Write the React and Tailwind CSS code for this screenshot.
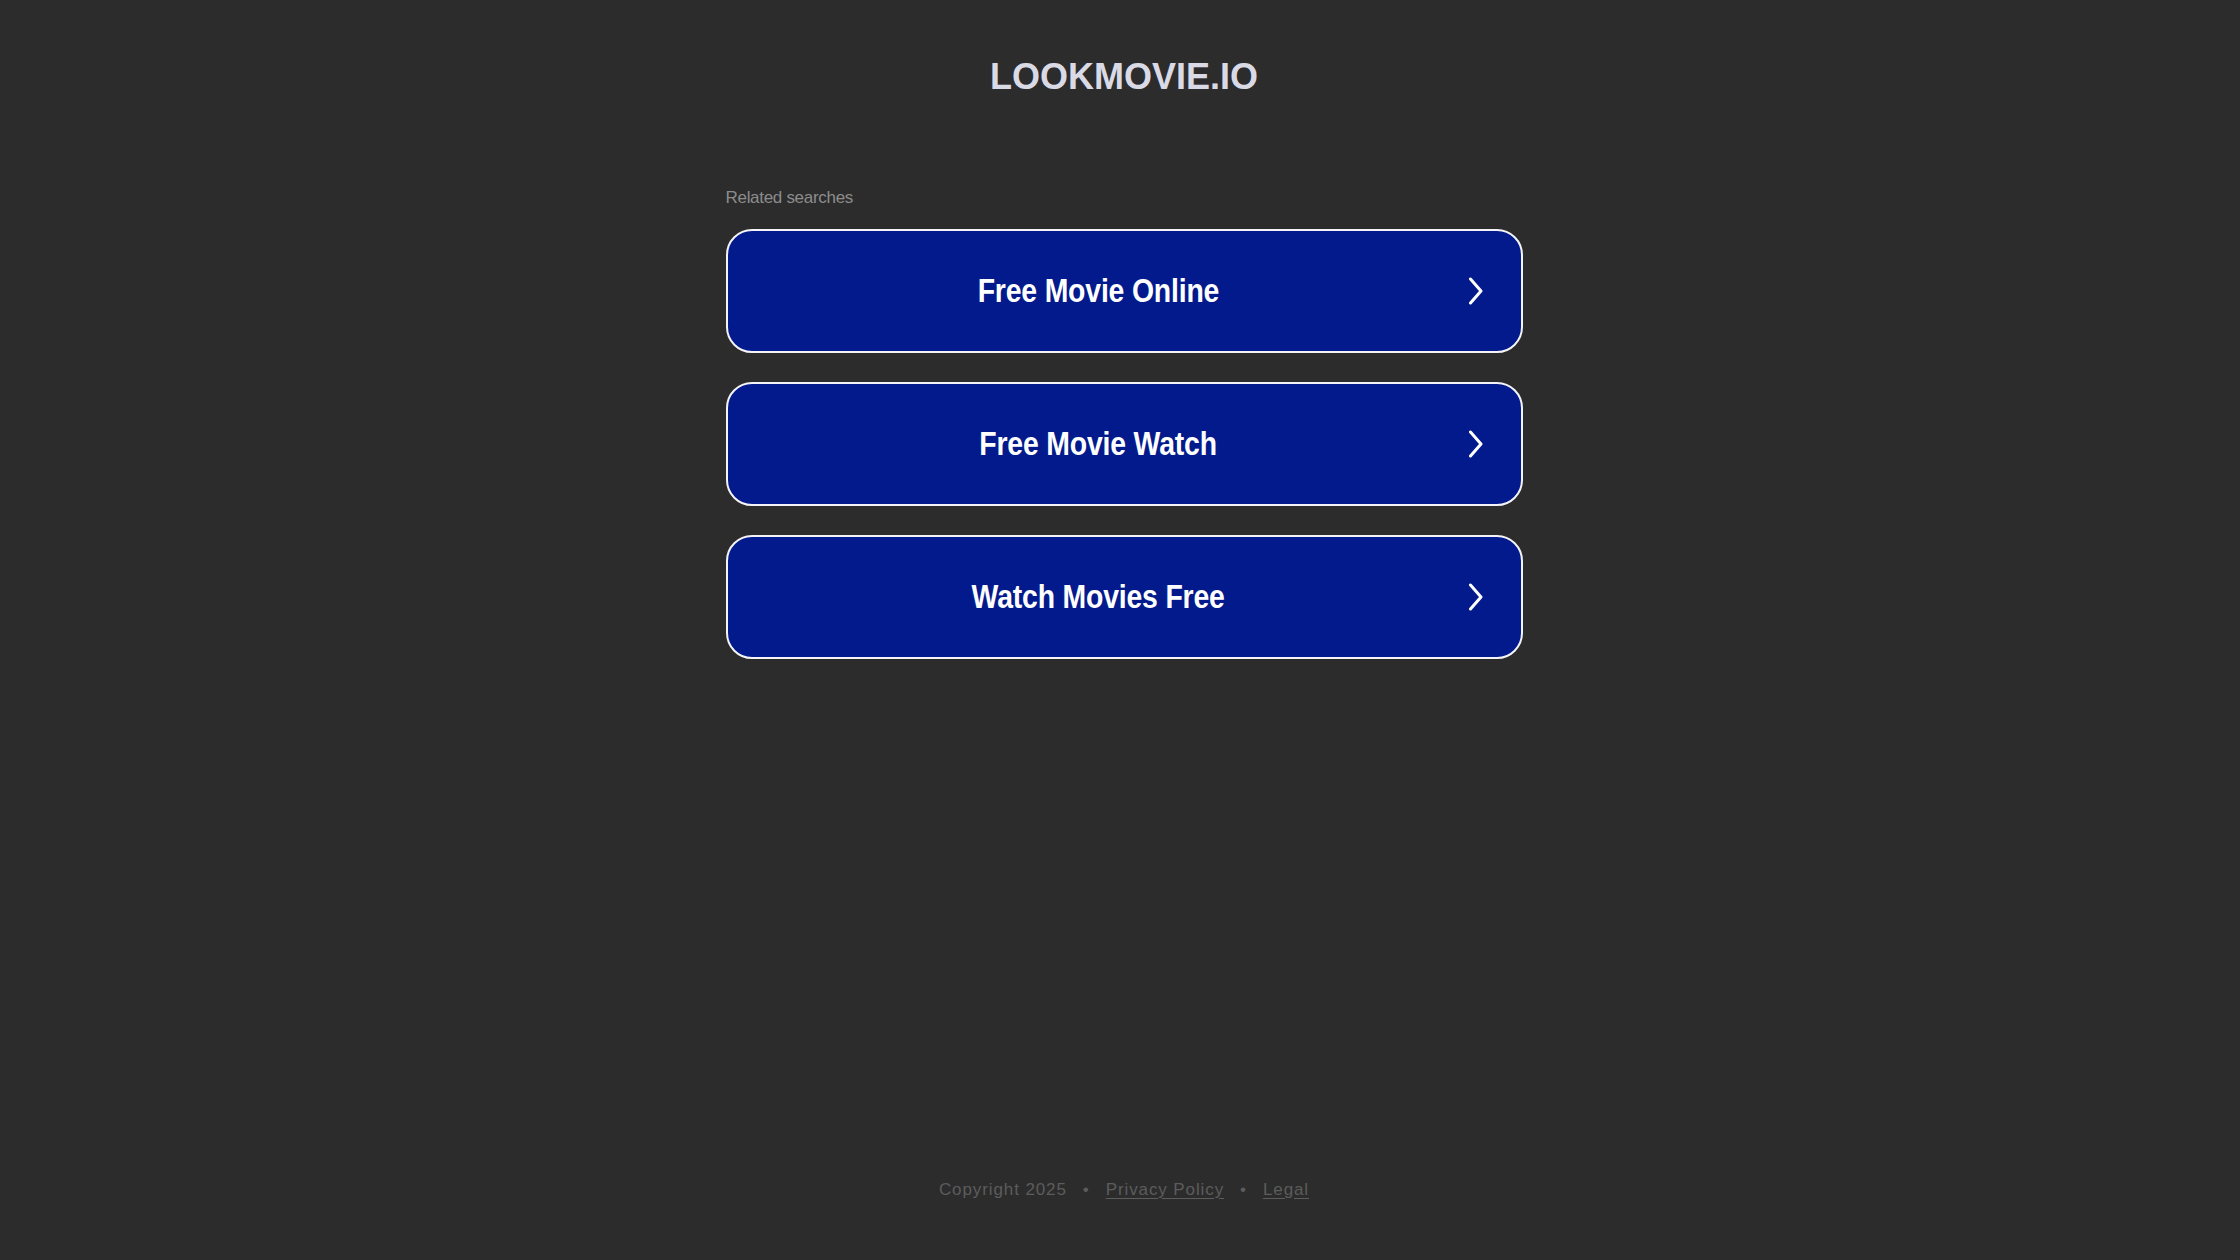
// Parked domain landing page
const searches = ['Free Movie Online', 'Free Movie Watch', 'Watch Movies Free'];

function Chevron() {
  return (
    <svg width="16" height="28" viewBox="0 0 16 28" fill="none" className="shrink-0">
      <path d="M2.5 2 L13 14 L2.5 26" stroke="#ffffff" strokeWidth="3" strokeLinecap="round" strokeLinejoin="round" />
    </svg>
  );
}

export default function App() {
  return (
    <div
      className="min-h-[1260px] bg-[#2c2c2c] flex flex-col pl-2"
      style={{ fontFamily: '"Liberation Sans", Arial, sans-serif' }}
    >
      <h1 className="text-center text-[36px] leading-[44px] font-bold text-[#d9dae6] pt-[55px]">LOOKMOVIE.IO</h1>

      <div className="w-[797px] mx-auto mt-[89px]">
        <div className="text-[17px] leading-[20px] text-[#8c8c8c] tracking-[-0.3px]">Related searches</div>
        <div className="flex flex-col gap-[29px] mt-[21px]">
          {searches.map((s) => (
            <a
              key={s}
              href="#"
              className="h-[124px] flex items-center bg-[#021a8c] border-[2.5px] border-[#f4f4f8] rounded-[26px]"
            >
              <span className="flex-1 text-center pl-[6px]">
                <span className="inline-block scale-x-[0.86] text-white font-bold text-[33px] tracking-[-0.2px]">
                  {s}
                </span>
              </span>
              <span className="w-[57px] flex justify-start pl-[4px]">
                <Chevron />
              </span>
            </a>
          ))}
        </div>
      </div>

      <div className="mt-auto pb-[58px] text-center text-[17px] leading-[24px] tracking-[0.9px] text-[#5c5c5c]">
        <span>Copyright 2025</span>
        <span className="mx-[16px]">•</span>
        <a href="#" className="underline underline-offset-[3px]">Privacy Policy</a>
        <span className="mx-[16px]">•</span>
        <a href="#" className="underline underline-offset-[3px]">Legal</a>
      </div>
    </div>
  );
}
